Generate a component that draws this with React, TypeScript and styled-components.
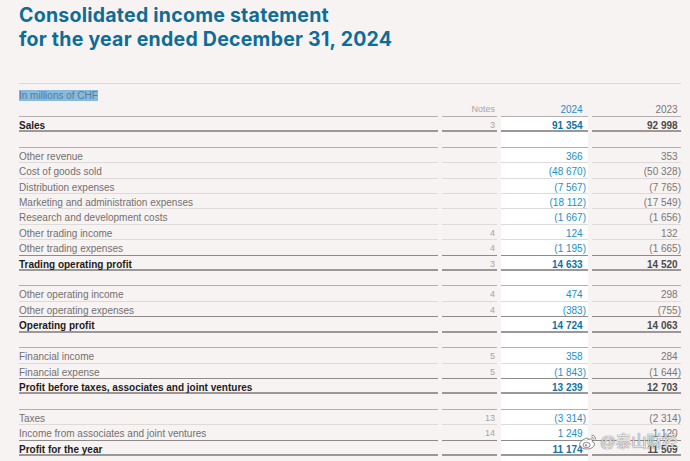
import React from "react";
import styled, { createGlobalStyle } from "styled-components";

const GlobalStyle = createGlobalStyle`
  html, body {
    margin: 0;
    padding: 0;
    background: #f7f3f2;
  }
  body {
    font-family: "Liberation Sans", Arial, sans-serif;
  }
`;

const Page = styled.div`
  position: relative;
  width: 690px;
  height: 461px;
  overflow: hidden;
  padding-left: 19px;
  box-sizing: border-box;
  background: #f7f3f2;
`;

const TitleBlock = styled.h1`
  margin: 0;
  height: 83px;
  padding-top: 4px;
  box-sizing: border-box;
  font-family: Inter, "Liberation Sans", sans-serif;
  font-weight: 700;
  font-size: 19.5px;
  line-height: 23.5px;
  color: #0d6d98;
  letter-spacing: 0.25px;
`;

const TableWrap = styled.div`
  width: 662px;
  border-top: 1px solid #dcd8d7;
`;

const Caption = styled.div`
  margin-top: 5px;
  height: 13px;
  font-size: 10px;
  line-height: 13px;
`;

const Highlight = styled.span`
  background: #86bbdf;
  color: #5d7c92;
`;

const Grid = styled.div`
  display: grid;
  grid-template-columns: 419px 55px 87px 89px;
  column-gap: 4px;
  grid-auto-rows: 15.41px;
  grid-template-rows: 15px;
  font-size: 10px;
`;

type Line = "none" | "light" | "mid" | "dark" | "thick";

const lineCss: Record<Line, string> = {
  none: "border-bottom: 1px solid transparent;",
  light: "border-bottom: 1px solid #dedad9;",
  mid: "border-bottom: 1px solid #b3afae;",
  dark: "border-bottom: 1px solid #8e8a8a;",
  thick: "border-bottom: 2px solid #9c9898;",
};

const Cell = styled.div<{ $line: Line; $header?: boolean; $tail?: boolean }>`
  box-sizing: border-box;
  height: ${(p) => (p.$header ? "15px" : "15.41px")};
  ${(p) => lineCss[p.$line]}
  line-height: 13px;
  padding-top: ${(p) => (p.$header ? "1px" : p.$tail ? "3px" : "2px")};
  white-space: nowrap;
  overflow: visible;
`;

const LabelCell = styled(Cell)<{ $bold?: boolean }>`
  color: ${(p) => (p.$bold ? "#1e1c1c" : "#737070")};
  font-weight: ${(p) => (p.$bold ? 700 : 400)};
`;

const NotesCell = styled(Cell)`
  text-align: right;
  padding-right: 2px;
  color: #a8a4a4;
  font-size: 9px;
`;

const CurCell = styled(Cell)<{ $bold?: boolean }>`
  text-align: right;
  padding-right: 2px;
  background: ${(p) => (p.$header ? "transparent" : "#ffffff")};
  color: ${(p) => (p.$bold ? "#0e74a4" : "#2190c4")};
  font-weight: ${(p) => (p.$bold ? 700 : 400)};
`;

const PrevCell = styled(Cell)<{ $bold?: boolean }>`
  text-align: right;
  padding-right: 0;
  color: ${(p) => (p.$bold ? "#4e4a4a" : "#7a7676")};
  font-weight: ${(p) => (p.$bold ? 700 : 400)};
`;

const Ghost = styled.span`
  visibility: hidden;
`;

const Watermark = styled.div`
  position: absolute;
  left: 578px;
  top: 432px;
  display: flex;
  align-items: center;
  gap: 2px;
  font-family: "Liberation Sans", "Noto Sans CJK SC", sans-serif;
  font-size: 15.5px;
  line-height: 20px;
  color: rgba(255, 255, 255, 0.85);
  text-shadow: 0 0 1px rgba(50, 50, 50, 0.7), 0 0 1px rgba(50, 50, 50, 0.5);
  pointer-events: none;
`;

const Num = ({ v }: { v: string }) =>
  v.startsWith("(") ? <>{v}</> : (
    <>
      {v}
      <Ghost>)</Ghost>
    </>
  );

type Row = {
  label: string;
  notes?: string;
  cur: string;
  prev: string;
  total?: boolean;
};

const sections: Row[][] = [
  [{ label: "Sales", notes: "3", cur: "91 354", prev: "92 998", total: true }],
  [
    { label: "Other revenue", cur: "366", prev: "353" },
    { label: "Cost of goods sold", cur: "(48 670)", prev: "(50 328)" },
    { label: "Distribution expenses", cur: "(7 567)", prev: "(7 765)" },
    { label: "Marketing and administration expenses", cur: "(18 112)", prev: "(17 549)" },
    { label: "Research and development costs", cur: "(1 667)", prev: "(1 656)" },
    { label: "Other trading income", notes: "4", cur: "124", prev: "132" },
    { label: "Other trading expenses", notes: "4", cur: "(1 195)", prev: "(1 665)" },
    { label: "Trading operating profit", notes: "3", cur: "14 633", prev: "14 520", total: true },
  ],
  [
    { label: "Other operating income", notes: "4", cur: "474", prev: "298" },
    { label: "Other operating expenses", notes: "4", cur: "(383)", prev: "(755)" },
    { label: "Operating profit", cur: "14 724", prev: "14 063", total: true },
  ],
  [
    { label: "Financial income", notes: "5", cur: "358", prev: "284" },
    { label: "Financial expense", notes: "5", cur: "(1 843)", prev: "(1 644)" },
    { label: "Profit before taxes, associates and joint ventures", cur: "13 239", prev: "12 703", total: true },
  ],
  [
    { label: "Taxes", notes: "13", cur: "(3 314)", prev: "(2 314)" },
    { label: "Income from associates and joint ventures", notes: "14", cur: "1 249", prev: "1 120" },
    { label: "Profit for the year", cur: "11 174", prev: "11 509", total: true },
  ],
];

const WeiboIcon = () => (
  <svg width="20" height="18" viewBox="0 0 20 18" fill="none">
    <path
      d="M8.5 5.2c-3.6.9-6.8 3.6-6.8 6.2 0 2.6 3.2 4.6 7.2 4.6 4.3 0 7.6-2.3 7.6-4.8 0-1.6-1.4-2.3-2.4-2.6.6-1.4.3-2.6-1.6-2.6-.9 0-2 .4-2.6.7.3-1.3-.2-2-1.4-1.5z"
      fill="rgba(255,255,255,0.8)"
      stroke="rgba(60,60,60,0.65)"
      strokeWidth="0.9"
    />
    <ellipse cx="8.6" cy="12" rx="3.6" ry="2.6" fill="none" stroke="rgba(60,60,60,0.65)" strokeWidth="0.9" />
    <circle cx="8" cy="12.3" r="1.1" fill="rgba(60,60,60,0.6)" />
    <path d="M14 2.2c2.2 0 3.8 1.8 3.4 4" stroke="rgba(60,60,60,0.65)" strokeWidth="0.9" strokeLinecap="round" />
    <path d="M13.8 4.2c1 0 1.7.8 1.5 1.8" stroke="rgba(60,60,60,0.65)" strokeWidth="0.9" strokeLinecap="round" />
  </svg>
);

export default function App() {
  const rows: React.ReactNode[] = [];

  sections.forEach((sec, si) => {
    if (si > 0) {
      rows.push(
        <React.Fragment key={`sp${si}`}>
          <LabelCell $line="mid" />
          <NotesCell $line="mid" />
          <CurCell $line="mid" />
          <PrevCell $line="mid" />
        </React.Fragment>
      );
    }
    sec.forEach((r, ri) => {
      const next = sec[ri + 1];
      const line: Line = r.total ? "thick" : next && next.total ? "dark" : "light";
      rows.push(
        <React.Fragment key={`${si}-${ri}`}>
          <LabelCell $line={line} $bold={r.total}>{r.label}</LabelCell>
          <NotesCell $line={line}>{r.notes ?? ""}</NotesCell>
          <CurCell $line={line} $bold={r.total}>
            <Num v={r.cur} />
          </CurCell>
          <PrevCell $line={line} $bold={r.total}>
            <Num v={r.prev} />
          </PrevCell>
        </React.Fragment>
      );
    });
  });

  return (
    <Page>
      <GlobalStyle />
      <TitleBlock>
        Consolidated income statement
        <br />
        for the year ended December 31, 2024
      </TitleBlock>
      <TableWrap>
        <Caption>
          <Highlight>In millions of CHF</Highlight>
        </Caption>
        <Grid>
          <LabelCell $line="mid" $header />
          <NotesCell $line="mid" $header>Notes</NotesCell>
          <CurCell $line="mid" $header>
            <Num v="2024" />
          </CurCell>
          <PrevCell $line="mid" $header>
            <Num v="2023" />
          </PrevCell>
          {rows}
          <LabelCell $line="light" $tail>of which attributable to non-controlling interests</LabelCell>
          <NotesCell $line="light" $tail />
          <CurCell $line="light" $tail>
            <Num v="290" />
          </CurCell>
          <PrevCell $line="light" $tail>
            <Num v="300" />
          </PrevCell>
        </Grid>
      </TableWrap>
      <Watermark>
        <WeiboIcon />
        <span>@泰山财经</span>
      </Watermark>
    </Page>
  );
}
